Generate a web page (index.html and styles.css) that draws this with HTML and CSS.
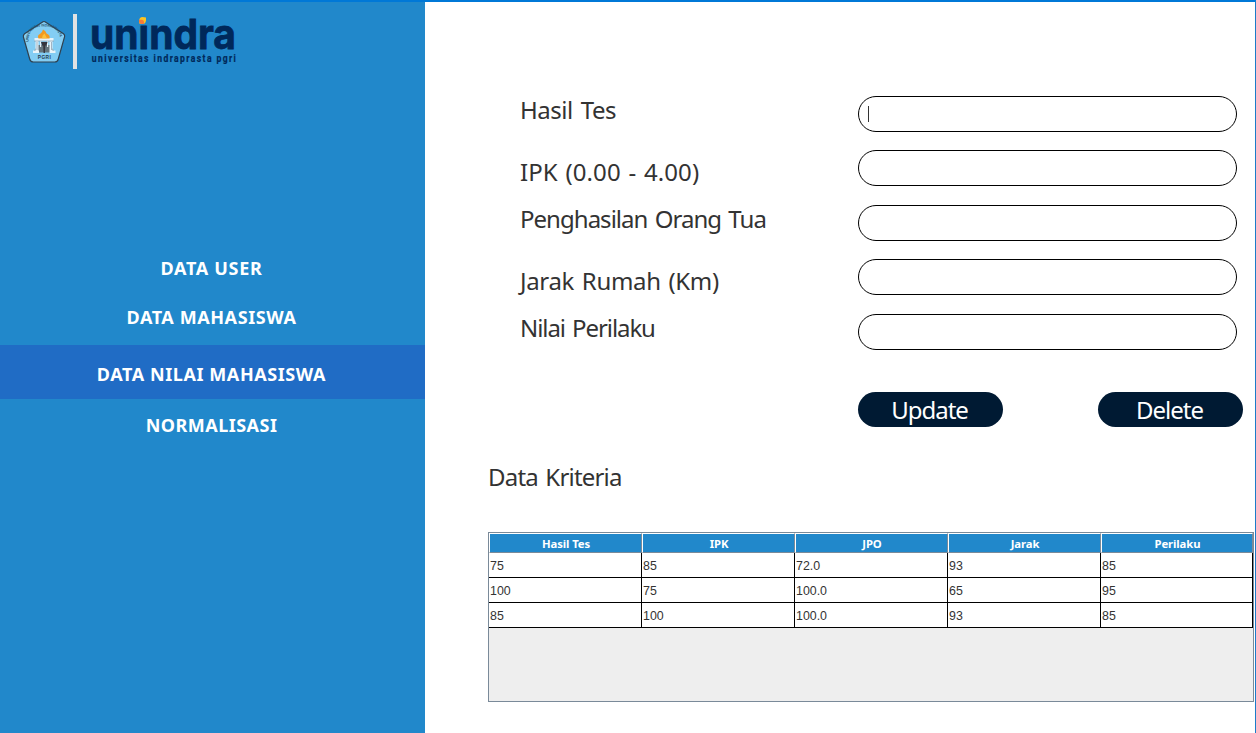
FILE: index.html
```
<!DOCTYPE html>
<html lang="id">
<head>
<meta charset="utf-8">
<title>Unindra</title>
<link rel="stylesheet" href="styles.css">
</head>
<body>
<div class="window">
  <aside class="sidebar">
    <svg class="logo" width="240" height="70" viewBox="0 0 240 70">
      <path d="M43 19.800 Q44 19.200 45 19.800 L63.500 31.800 Q65 33 64.600 34.600 L58.300 57 Q57.600 60 54.800 60 L33.300 60 Q30.500 60 29.700 57 L23.400 35 Q23 33 24.500 31.800Z" fill="#83cdf3" stroke="#30414f" stroke-width="1.200"/>
      <path id="arc" d="M28.500 40 Q28 24.500 44 24.500 Q60 24.500 60.500 40" fill="none"/>
      <text class="seal-arc"><textPath href="#arc" textLength="46" lengthAdjust="spacingAndGlyphs">UNIVERSITAS INDRAPRASTA</textPath></text>
      <path d="M33 50.500 L38 43 H50 L55 50.500Z" fill="#64747c"/>
      <path d="M34.500 36 h19 v3 h-19z M35.500 39 h3 v10 h-3z M49.500 39 h3 v10 h-3z M40 39 h1.200 v6 h-1.200z M47 39 h1.200 v6 h-1.200z M33 48.500 h6 v2.500 h-6z M49.500 48.500 h6 v2.500 h-6z" fill="#e8f4fa"/>
      <path d="M34 39 h20 M37 40 v8 M51.500 40 v8" stroke="#8298aa" stroke-width=".7"/>
      <path d="M41 40 h6.500 l-1 3.500 h-1.200 l-.4 7.500 h-1.300 l-.4 -7.500 h-1.200z" fill="#35353d"/>
      <path d="M38.500 36.500 Q37 33 40 32 Q42.300 30.500 43 27.500 Q46 29 46.500 31.500 Q50.500 33 49.500 36.500Z" fill="#f39a1f"/>
      <path d="M42 36.200 Q42 33 44.500 31.500 Q46 34.500 47 36.200Z" fill="#fbc13b"/>
      <text class="seal-name" x="37.800" y="57.200" textLength="13">PGRI</text>
      <rect x="73" y="12" width="4" height="55" fill="#e0e2e3"/>
      <text class="brand" x="90" y="47" textLength="146" lengthAdjust="spacingAndGlyphs">unındra</text>
      <path d="M139.200 18.500 Q139.300 15.200 142.500 15 L146 15.500 V18.500 Q145.500 22 142.500 22 L139.200 21.500Z" fill="#fcc422"/>
      <path d="M139 17.800 H142 Q144 18 144 20 V22 H141.500 Q139 21.500 139 19.500Z" fill="#f47a39"/>
      <text class="tagline" transform="translate(91.800 59.700) scale(.86 1)" textLength="167.500">universitas indraprasta pgri</text>
    </svg>
    <nav class="menu">
      <a class="item user">DATA USER</a>
      <a class="item mahasiswa">DATA MAHASISWA</a>
      <a class="item nilai">DATA NILAI MAHASISWA</a>
      <a class="item normal">NORMALISASI</a>
    </nav>
  </aside>
  <main class="content">
    <section class="form">
      <div class="labels">
        <label class="hasil">Hasil Tes</label>
        <label class="ipk">IPK (0.00 - 4.00)</label>
        <label class="ortu">Penghasilan Orang Tua</label>
        <label class="jarak">Jarak Rumah (Km)</label>
        <label class="perilaku">Nilai Perilaku</label>
      </div>
      <div class="fields">
        <div class="field"><span class="caret"></span></div>
        <div class="field"></div>
        <div class="field"></div>
        <div class="field"></div>
        <div class="field"></div>
      </div>
    </section>
    <div class="buttons">
      <div class="button">Update</div>
      <div class="button">Delete</div>
    </div>
    <h2 class="title">Data Kriteria</h2>
    <div class="scroll">
      <table class="grid">
        <colgroup><col span="4" class="wide"><col></colgroup>
        <thead><tr><th>Hasil Tes</th><th>IPK</th><th>JPO</th><th>Jarak</th><th>Perilaku</th></tr></thead>
        <tbody>
          <tr><td>75</td><td>85</td><td>72.0</td><td>93</td><td>85</td></tr>
          <tr><td>100</td><td>75</td><td>100.0</td><td>65</td><td>95</td></tr>
          <tr><td>85</td><td>100</td><td>100.0</td><td>93</td><td>85</td></tr>
        </tbody>
      </table>
    </div>
  </main>
</div>
</body>
</html>
```
FILE: styles.css
```
* { box-sizing: border-box; }
body { margin: 0; background: #fff; font-family: "Noto Sans", sans-serif; color: #333; overflow: hidden; }
.window { display: flex; width: 1256px; height: 733px; border-top: 2px solid #0078d7; border-right: 1px solid #1c7cc9; }
.sidebar { width: 425px; flex: none; background: #2188cb; }
.logo { display: block; overflow: visible; }
.seal-arc { font: bold 3.8px "Liberation Sans", sans-serif; fill: #24506b; }
.seal-name { font: bold 4.8px "Liberation Sans", sans-serif; fill: #26394c; }
.brand { font: 700 41.5px Inter, Roboto, sans-serif; fill: #00285a; stroke: #00285a; stroke-width: .8px; }
.tagline { font: bold 10px Roboto, sans-serif; fill: #00285a; stroke: #00285a; stroke-width: .2px; }
.menu { display: flex; flex-direction: column; padding-top: 172px; }
.item { height: 49px; line-height: 49px; padding-right: 2px; text-align: center; color: #fff; font-size: 18px; font-weight: 700; letter-spacing: .58px; }
.user { letter-spacing: .7px; }
.nilai { height: 54px; line-height: 59px; margin-top: 3px; background: #206cc5; }
.normal { height: 53px; line-height: 53px; letter-spacing: .48px; }
.content { flex: 1; min-width: 0; }
.form { display: flex; justify-content: space-between; padding: 93px 18px 0 95px; }
.labels { display: flex; flex-direction: column; font-size: 24px; line-height: 30px; white-space: nowrap; }
.hasil { letter-spacing: -.5px; word-spacing: 2.5px; }
.ipk, .jarak { margin-top: 32px; }
.ipk { letter-spacing: .1px; word-spacing: 1.3px; }
.jarak { letter-spacing: -.35px; word-spacing: 2px; }
.ortu, .perilaku { margin-top: 17px; }
.ortu { letter-spacing: -.97px; word-spacing: 2px; }
.perilaku { letter-spacing: -1.08px; word-spacing: 2px; }
.fields { display: flex; flex-direction: column; width: 379px; padding-top: 1px; }
.field { height: 36px; margin-bottom: 18px; padding: 9px 0 0 9px; border: 1px solid #000; border-radius: 18px; }
.field:nth-child(even) { margin-bottom: 19px; }
.field:last-child { margin-bottom: 0; }
.caret { display: block; width: 1px; height: 16px; background: #333; }
.buttons { display: flex; justify-content: space-between; padding: 42px 12px 0 433px; }
.button { width: 145px; height: 35px; padding-right: 2px; border-radius: 17.5px; background: #001a33; color: #fff; font-size: 24px; line-height: 36px; letter-spacing: -1px; text-align: center; }
.title { margin: 35px 0 0 63px; font-size: 24px; font-weight: 400; line-height: 30px; letter-spacing: -.8px; word-spacing: 2px; }
.scroll { width: 766px; height: 170px; margin: 40px 0 0 63px; border: 1px solid #7a8a99; background: #eee; }
.grid { width: 764px; table-layout: fixed; border-collapse: separate; border-spacing: 0; background: #fff; }
.wide { width: 153px; }
.grid th { height: 20px; padding: 2px 0 0 1px; border: 1px solid #7a8a99; border-top-color: #fff; border-left-color: #fff; background: #2188cb; color: #fff; font-size: 11.3px; font-weight: 700; line-height: 16px; letter-spacing: -.1px; text-align: center; }
.grid td { height: 25px; padding: 2px 1px 0; border-right: 1px solid #000; border-bottom: 1px solid #000; font: 12.4px/22px "Liberation Sans", sans-serif; }
```
